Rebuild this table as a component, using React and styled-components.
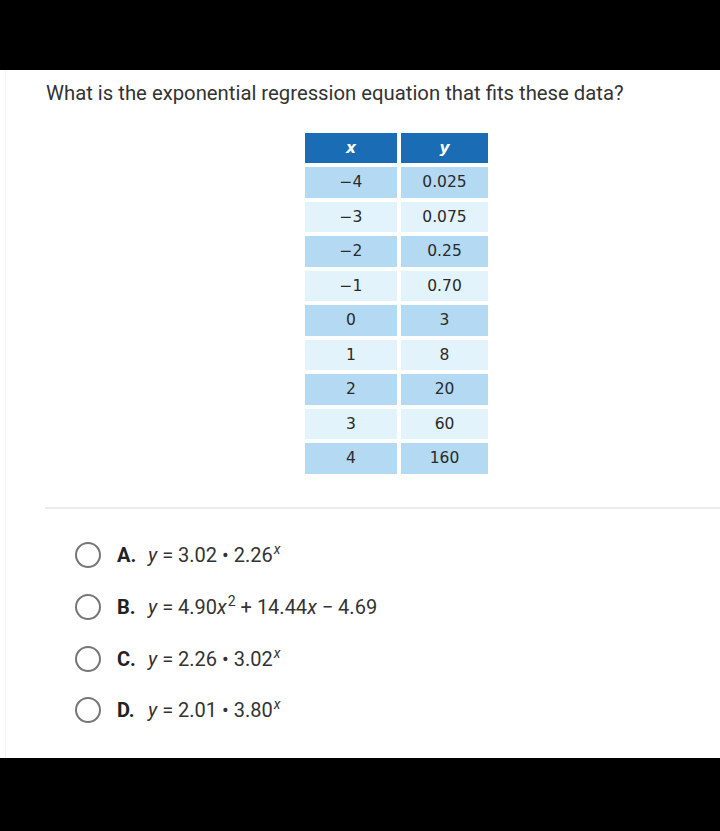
import React from "react";
import styled, { createGlobalStyle } from "styled-components";

const Global = createGlobalStyle`
  html, body { margin: 0; padding: 0; background: #000; }
  body { font-family: Roboto, "Liberation Sans", sans-serif; }
`;

const Page = styled.div`
  width: 720px;
  height: 831px;
  background: #000;
  padding-top: 70px;
  box-sizing: border-box;
`;

const Sheet = styled.main`
  background: #fff;
  height: 688px;
  box-sizing: border-box;
  padding-top: 11px;
  box-shadow: inset 5px 0 0 #fff, inset 6px 0 0 #f4f4f4;
`;

const Question = styled.p`
  margin: 0 0 28px 46px;
  font-size: 20.3px;
  line-height: 24px;
  color: #333;
`;

const DataTable = styled.div`
  display: grid;
  grid-template-columns: 92px 87px;
  column-gap: 4px;
  row-gap: 4px;
  margin-left: 305px;
  width: max-content;
  font-family: "DejaVu Sans", Verdana, sans-serif;
  font-size: 15.5px;
`;

const HeadCell = styled.div`
  background: #1a6db4;
  color: #fff;
  font-weight: bold;
  font-style: italic;
  height: 30px;
  display: flex;
  align-items: center;
  justify-content: center;
`;

const Cell = styled.div`
  background: ${(p) => (p.$dark ? "#b4d9f3" : "#e3f3fb")};
  color: #2a2a2a;
  height: 30.5px;
  display: flex;
  align-items: center;
  justify-content: center;
`;

const Divider = styled.hr`
  border: none;
  height: 2px;
  background: #ececec;
  margin: 33px 0 21px 45px;
`;

const Options = styled.ul`
  list-style: none;
  margin: 0;
  padding: 0 0 0 75px;
`;

const Option = styled.li`
  height: 51.7px;
  display: flex;
  align-items: center;
  font-size: 20px;
  color: #333;
`;

const Radio = styled.span`
  width: 26px;
  height: 26px;
  box-sizing: border-box;
  border: 2.5px solid #767676;
  border-radius: 50%;
  margin-right: 16px;
  flex: none;
`;

const Letter = styled.b`
  font-weight: 700;
  color: #222;
  width: 31px;
`;

const Var = styled.i`
  font-style: italic;
`;

const Sup = styled.sup`
  font-size: 14px;
  font-style: ${(p) => (p.$upright ? "normal" : "italic")};
  vertical-align: 0;
  position: relative;
  top: -8px;
  margin-left: 1px;
`;

const rows = [
  ["\u22124", "0.025"],
  ["\u22123", "0.075"],
  ["\u22122", "0.25"],
  ["\u22121", "0.70"],
  ["0", "3"],
  ["1", "8"],
  ["2", "20"],
  ["3", "60"],
  ["4", "160"],
];

const options = [
  { l: "A.", eq: <><Var>y</Var> = 3.02 • 2.26<Sup>x</Sup></> },
  { l: "B.", eq: <><Var>y</Var> = 4.90<Var>x</Var><Sup $upright>2</Sup> + 14.44<Var>x</Var> − 4.69</> },
  { l: "C.", eq: <><Var>y</Var> = 2.26 • 3.02<Sup>x</Sup></> },
  { l: "D.", eq: <><Var>y</Var> = 2.01 • 3.80<Sup>x</Sup></> },
];

export default function App() {
  return (
    <Page>
      <Global />
      <Sheet>
        <Question>What is the exponential regression equation that fits these data?</Question>
        <DataTable>
          <HeadCell>x</HeadCell>
          <HeadCell>y</HeadCell>
          {rows.map(([x, y], i) => (
            <React.Fragment key={i}>
              <Cell $dark={i % 2 === 0}>{x}</Cell>
              <Cell $dark={i % 2 === 0}>{y}</Cell>
            </React.Fragment>
          ))}
        </DataTable>
        <Divider />
        <Options>
          {options.map((o) => (
            <Option key={o.l}>
              <Radio />
              <Letter>{o.l}</Letter>
              <span>{o.eq}</span>
            </Option>
          ))}
        </Options>
      </Sheet>
    </Page>
  );
}
